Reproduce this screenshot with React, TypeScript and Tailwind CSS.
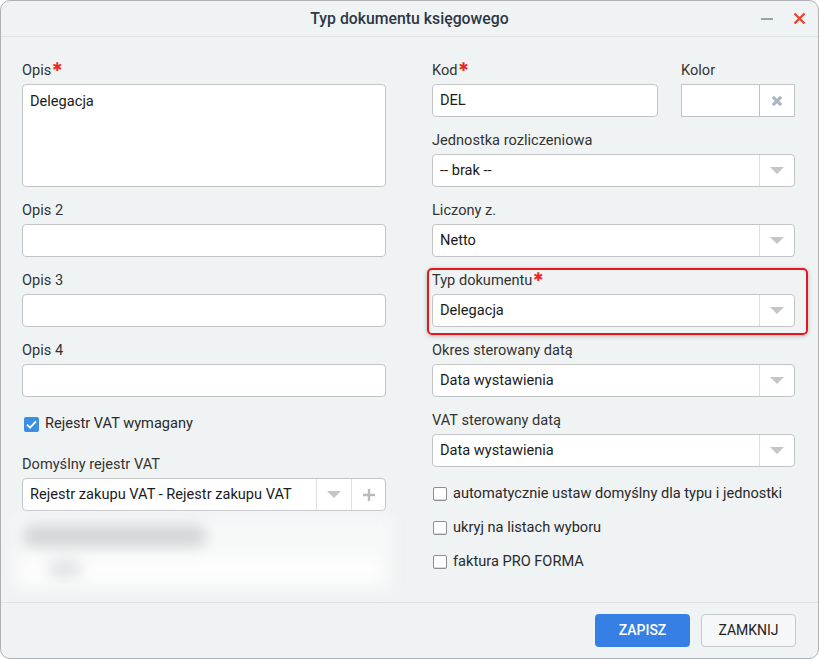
import React from "react";

const font = { fontFamily: "Roboto, 'Noto Sans', Arial, sans-serif" };

function Req() {
  return (
    <span
      className="ml-[1px] inline-block align-top text-[12px] leading-[14px] font-bold text-[#f0261a]"
      style={{ fontFamily: "'DejaVu Sans', sans-serif" }}
    >
      ✱
    </span>
  );
}

function Label({ children, req }: { children: React.ReactNode; req?: boolean }) {
  return (
    <div className="h-[20px] mb-[4px] text-[14.6px] leading-[20px] text-[#333]">
      {children}
      {req && <Req />}
    </div>
  );
}

function Caret() {
  return (
    <div className="w-0 h-0 border-l-[7px] border-r-[7px] border-t-[7px] border-l-transparent border-r-transparent border-t-[#c4c6c8]" />
  );
}

function TextBox({ value, tall }: { value?: string; tall?: boolean }) {
  return (
    <div
      className={`${tall ? "h-[103px] pt-[6px]" : "h-[33px] flex items-center"} rounded-[4px] border border-[#c2c4c6] bg-white px-[7px] text-[14.6px] text-[#1b1b1b]`}
    >
      {value}
    </div>
  );
}

function Select({ value, plus }: { value: string; plus?: boolean }) {
  return (
    <div className="h-[33px] flex rounded-[4px] border border-[#c2c4c6] bg-white text-[14.6px] text-[#1b1b1b]">
      <div className="flex-1 flex items-center px-[7px] truncate">{value}</div>
      <div className="w-[35px] flex items-center justify-center border-l border-[#dcdedf]">
        <Caret />
      </div>
      {plus && (
        <div className="w-[34px] flex items-center justify-center border-l border-[#dcdedf]">
          <svg width="14" height="14" viewBox="0 0 14 14">
            <path d="M7 1v12M1 7h12" stroke="#b9bcbf" strokeWidth="2.4" />
          </svg>
        </div>
      )}
    </div>
  );
}

function Field({
  label,
  req,
  children,
  className = "",
}: {
  label: string;
  req?: boolean;
  children: React.ReactNode;
  className?: string;
}) {
  return (
    <div className={className}>
      <Label req={req}>{label}</Label>
      {children}
    </div>
  );
}

function Check({ label, checked }: { label: string; checked?: boolean }) {
  return (
    <div className="h-[20px] flex items-center gap-[6px] text-[14.6px] text-[#2a2a2a]">
      {checked ? (
        <div className="ml-[2px] w-[15px] h-[15px] rounded-[2px] bg-[#3c8ee0] flex items-center justify-center">
          <svg width="11" height="9" viewBox="0 0 11 9">
            <path d="M1 4.6l3 3L10 1.4" stroke="#fff" strokeWidth="1.8" fill="none" />
          </svg>
        </div>
      ) : (
        <div className="ml-[1px] w-[14px] h-[14px] rounded-[2px] border border-[#8c8f92] bg-white shadow-[inset_0_-1px_0_#d8d8d8]" />
      )}
      <span>{label}</span>
    </div>
  );
}

export default function App() {
  return (
    <div className="w-[819px] h-[659px] bg-white" style={font}>
      <div className="h-full flex flex-col rounded-[10px] border border-[#aeb2b5] bg-[#f0f3f4] overflow-hidden">
        {/* title bar */}
        <div className="relative h-[36px] shrink-0 flex items-center justify-center border-b border-[#dde2e4]">
          <span className="text-[15.8px] font-medium text-[#2c3843]">Typ dokumentu księgowego</span>
          <div className="absolute right-[12px] top-0 h-full flex items-center gap-[20px]">
            <div className="w-[12px] h-[2px] bg-[#98a4ad]" />
            <svg width="13" height="13" viewBox="0 0 13 13">
              <path d="M1.5 1.5l10 10M11.5 1.5l-10 10" stroke="#ec4430" strokeWidth="2.3" />
            </svg>
          </div>
        </div>

        {/* form */}
        <div className="flex-1 grid grid-cols-[364px_363px] gap-x-[46px] pl-[21px] pt-[23px]">
          {/* left column */}
          <div className="flex flex-col">
            <Field label="Opis" req>
              <TextBox value="Delegacja" tall />
            </Field>
            <Field label="Opis 2" className="mt-[13px]">
              <TextBox />
            </Field>
            <Field label="Opis 3" className="mt-[13px]">
              <TextBox />
            </Field>
            <Field label="Opis 4" className="mt-[13px]">
              <TextBox />
            </Field>
            <div className="mt-[17px]">
              <Check label="Rejestr VAT wymagany" checked />
            </div>
            <Field label="Domyślny rejestr VAT" className="mt-[20px]">
              <Select value="Rejestr zakupu VAT - Rejestr zakupu VAT" plus />
            </Field>
            {/* obscured field */}
            <div className="mt-[6px] -ml-[10px] w-[380px] h-[72px] bg-[#f7f8f8] blur-[7px] relative">
              <div className="absolute left-[10px] top-[8px] w-[185px] h-[22px] rounded-full bg-[#d4d6d7]" />
              <div className="absolute left-[10px] top-[40px] w-[360px] h-[26px] rounded-[4px] bg-[#fdfdfd]" />
              <div className="absolute left-[36px] top-[44px] w-[34px] h-[16px] rounded-full bg-[#dfe1e2]" />
            </div>
          </div>

          {/* right column */}
          <div className="flex flex-col">
            <div className="flex gap-[23px]">
              <Field label="Kod" req className="w-[226px]">
                <TextBox value="DEL" />
              </Field>
              <Field label="Kolor" className="w-[114px]">
                <div className="h-[33px] flex border border-[#c2c4c6] bg-white">
                  <div className="flex-1" />
                  <div className="w-[35px] flex items-center justify-center border-l border-[#c2c4c6]">
                    <svg width="12" height="12" viewBox="0 0 12 12">
                      <path d="M1.8 1.8l8.4 8.4M10.2 1.8l-8.4 8.4" stroke="#aeb7c0" strokeWidth="3.2" />
                    </svg>
                  </div>
                </div>
              </Field>
            </div>
            <Field label="Jednostka rozliczeniowa" className="mt-[13px]">
              <Select value="-- brak --" />
            </Field>
            <Field label="Liczony z." className="mt-[13px]">
              <Select value="Netto" />
            </Field>
            <div className="relative mt-[13px]">
              <div className="absolute -left-[5px] -right-[13px] -top-[2px] -bottom-[8px] rounded-[5px] border-2 border-[#e8151b] shadow-[0_1px_4px_rgba(0,0,0,0.25)]" />
              <Field label="Typ dokumentu" req>
                <Select value="Delegacja" />
              </Field>
            </div>
            <Field label="Okres sterowany datą" className="mt-[13px]">
              <Select value="Data wystawienia" />
            </Field>
            <Field label="VAT sterowany datą" className="mt-[13px]">
              <Select value="Data wystawienia" />
            </Field>
            <div className="mt-[17px] flex flex-col gap-[14px]">
              <Check label="automatycznie ustaw domyślny dla typu i jednostki" />
              <Check label="ukryj na listach wyboru" />
              <Check label="faktura PRO FORMA" />
            </div>
          </div>
        </div>

        {/* buttons */}
        <div className="h-[56px] shrink-0 border-t border-[#dde2e4] flex items-start justify-end gap-[11px] pt-[11px] pr-[22px]">
          <button className="w-[95px] h-[33px] rounded-[4px] bg-[#367fe5] text-white text-[14px] font-medium">
            ZAPISZ
          </button>
          <button className="w-[95px] h-[33px] rounded-[4px] border border-[#c6c8ca] bg-[#f6f7f8] text-[#222] text-[14px]">
            ZAMKNIJ
          </button>
        </div>
      </div>
    </div>
  );
}
